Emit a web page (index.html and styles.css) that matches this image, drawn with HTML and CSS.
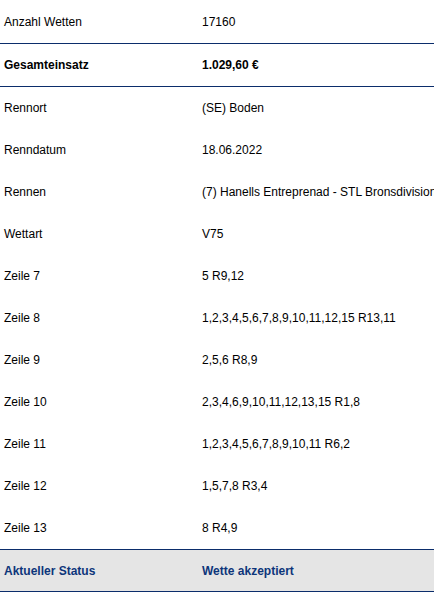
FILE: index.html
```html
<!DOCTYPE html>
<html lang="de">
<head>
<meta charset="utf-8">
<link rel="stylesheet" href="styles.css">
</head>
<body>
<div class="table">
  <div class="row first sep"><div class="label">Anzahl Wetten</div><div class="value">17160</div></div>
  <div class="row sep bold"><div class="label">Gesamteinsatz</div><div class="value">1.029,60 €</div></div>
  <div class="row"><div class="label">Rennort</div><div class="value">(SE) Boden</div></div>
  <div class="row"><div class="label">Renndatum</div><div class="value">18.06.2022</div></div>
  <div class="row"><div class="label">Rennen</div><div class="value">(7) Hanells Entreprenad - STL Bronsdivisionen</div></div>
  <div class="row"><div class="label">Wettart</div><div class="value">V75</div></div>
  <div class="row"><div class="label">Zeile 7</div><div class="value">5 R9,12</div></div>
  <div class="row"><div class="label">Zeile 8</div><div class="value">1,2,3,4,5,6,7,8,9,10,11,12,15 R13,11</div></div>
  <div class="row"><div class="label">Zeile 9</div><div class="value">2,5,6 R8,9</div></div>
  <div class="row"><div class="label">Zeile 10</div><div class="value">2,3,4,6,9,10,11,12,13,15 R1,8</div></div>
  <div class="row"><div class="label">Zeile 11</div><div class="value">1,2,3,4,5,6,7,8,9,10,11 R6,2</div></div>
  <div class="row"><div class="label">Zeile 12</div><div class="value">1,5,7,8 R3,4</div></div>
  <div class="row"><div class="label">Zeile 13</div><div class="value">8 R4,9</div></div>
  <div class="row status"><div class="label">Aktueller Status</div><div class="value">Wette akzeptiert</div></div>
</div>
</body>
</html>
```

FILE: styles.css
```css
html, body {
  margin: 0;
  padding: 0;
  background: #ffffff;
}
body {
  width: 434px;
  height: 596px;
  overflow: hidden;
  font-family: "Liberation Sans", Arial, sans-serif;
  font-size: 12px;
  color: #000000;
}
.table {
  display: flex;
  flex-direction: column;
  width: 434px;
}
.row {
  display: grid;
  grid-template-columns: 198px 1fr;
  align-items: center;
  height: 42px;
  box-sizing: border-box;
  white-space: nowrap;
  overflow: hidden;
}
.row.first {
  height: 44px;
}
.row.sep {
  border-bottom: 1px solid #0b2d6b;
}
.row.sep.first {
  height: 44px;
}
.row.sep.bold {
  height: 43px;
}
.label, .value {
  padding-left: 4px;
  overflow: hidden;
}
.bold {
  font-weight: bold;
}
.status {
  height: 43px;
  background: #e5e5e5;
  border-top: 1px solid #0b2d6b;
  border-bottom: 1px solid #0b2d6b;
  color: #0d357a;
  font-weight: bold;
}
```
